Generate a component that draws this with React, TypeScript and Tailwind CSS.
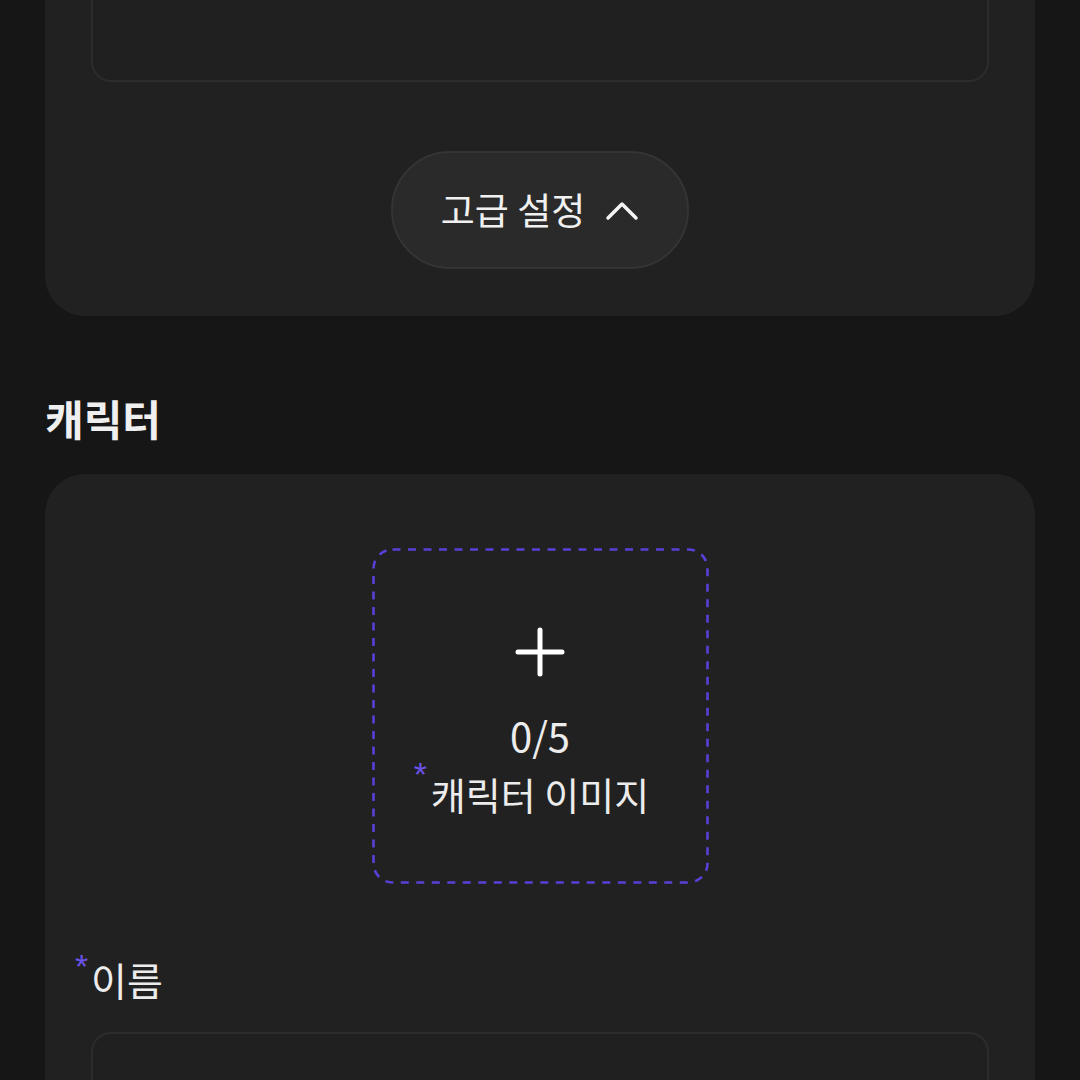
const font = { fontFamily: '"Noto Sans CJK KR", "Noto Sans", sans-serif' };

function Required({ className = "" }: { className?: string }) {
  return (
    <span
      className={`text-[34px] leading-none text-[#6b52e6] ${className}`}
      style={{ fontFamily: '"Liberation Sans", sans-serif' }}
    >
      *
    </span>
  );
}

export default function App() {
  return (
    <div className="h-[1080px] w-[1080px] overflow-hidden bg-[#161616] text-[#ececec]" style={font}>
      <div className="px-[45px]">
        <div className="-mt-[120px] rounded-[40px] bg-[#212121] px-[46px] pt-[46px] pb-[47px]">
          <div className="h-[156px] rounded-[20px] border-2 border-[#2c2c2c] bg-[#202020]" />
          <div className="mt-[69px] flex justify-center">
            <button
              type="button"
              className="flex h-[118px] w-[298px] items-center justify-center gap-[20px] rounded-full border-2 border-[#343434] bg-[#2a2a2a] text-[37px] text-[#f0f0f0]"
            >
              <span>고급 설정</span>
              <svg width="34" height="20" viewBox="0 0 34 20" fill="none" className="mt-[2px]">
                <polyline points="3,17 17,3 31,17" stroke="#f4f4f4" strokeWidth="3.5" strokeLinecap="round" strokeLinejoin="round" />
              </svg>
            </button>
          </div>
        </div>

        <h2 className="mt-[77px] text-[42px] font-bold leading-[50px] text-[#efefef]">캐릭터</h2>

        <div className="mt-[31px] rounded-[40px] bg-[#212121] px-[46px] pt-[74px] pb-[60px]">
          <div className="flex justify-center">
            <div className="relative flex h-[336px] w-[337px] flex-col items-center pt-[79px]">
              <svg className="pointer-events-none absolute inset-0" width="337" height="336" fill="none">
                <rect
                  x="1.5"
                  y="1.5"
                  width="334"
                  height="333"
                  rx="19"
                  stroke="#5a3fd8"
                  strokeWidth="2.6"
                  strokeDasharray="8 7.5"
                />
              </svg>
              <svg width="50" height="50" viewBox="0 0 50 50" fill="none">
                <path d="M25 3v44M3 25h44" stroke="#ffffff" strokeWidth="5" strokeLinecap="round" />
              </svg>
              <div className="mt-[34px] text-[40px] leading-[48px]">0/5</div>
              <div className="relative mt-[10px] text-[38px] leading-[50px]">
                <Required className="absolute -left-[17px] -top-[12px]" />
                캐릭터 이미지
              </div>
            </div>
          </div>

          <div className="relative mt-[70px] text-[39px] leading-[50px]">
            <Required className="absolute -left-[16px] -top-[5px]" />
            이름
          </div>
          <div className="mt-[28px] h-[120px] rounded-[20px] border-2 border-[#2c2c2c] bg-[#202020]" />
        </div>
      </div>
    </div>
  );
}
